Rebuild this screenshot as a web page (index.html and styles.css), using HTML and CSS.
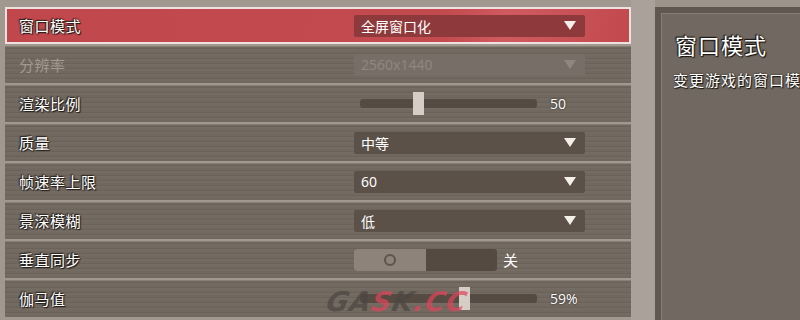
FILE: index.html
```html
<!DOCTYPE html>
<html lang="zh">
<head>
<meta charset="utf-8">
<link rel="stylesheet" href="styles.css">
</head>
<body>
<div class="screen">
  <div class="list">
    <div class="row selected">
      <div class="label">窗口模式</div>
      <div class="control"><div class="select sel-red"><span>全屏窗口化</span><i class="arrow"></i></div></div>
    </div>
    <div class="row disabled">
      <div class="label">分辨率</div>
      <div class="control"><div class="select sel-dis"><span>2560x1440</span><i class="arrow"></i></div></div>
    </div>
    <div class="row">
      <div class="label">渲染比例</div>
      <div class="control"><div class="slider"><div class="track"><div class="thumb" style="left:53px"></div></div><span class="val">50</span></div></div>
    </div>
    <div class="row">
      <div class="label">质量</div>
      <div class="control"><div class="select"><span>中等</span><i class="arrow"></i></div></div>
    </div>
    <div class="row">
      <div class="label">帧速率上限</div>
      <div class="control"><div class="select"><span>60</span><i class="arrow"></i></div></div>
    </div>
    <div class="row">
      <div class="label">景深模糊</div>
      <div class="control"><div class="select"><span>低</span><i class="arrow"></i></div></div>
    </div>
    <div class="row">
      <div class="label">垂直同步</div>
      <div class="control"><div class="toggle"><div class="tog-on"><span class="ring"></span></div></div><span class="tog-text">关</span></div>
    </div>
    <div class="row">
      <div class="label">伽马值</div>
      <div class="control"><div class="slider"><div class="track"><div class="thumb" style="left:99px"></div></div><span class="val">59%</span></div></div>
      <div class="watermark"><span class="wm-d">GA</span><span class="wm-r">S</span><span class="wm-d">K</span><span class="wm-r">.CC</span></div>
    </div>
  </div>
  <div class="gap"></div>
  <div class="panel">
    <div class="panel-inner">
      <div class="p-title">窗口模式</div>
      <div class="p-desc">变更游戏的窗口模式</div>
    </div>
  </div>
</div>
</body>
</html>
```
FILE: styles.css
```css
* { box-sizing: border-box; }
html, body { margin: 0; padding: 0; }
body {
  width: 800px; height: 320px; overflow: hidden;
  background: #9d958c;
  font-family: "Noto Sans CJK SC", "Noto Sans", sans-serif;
  color: #fff;
}
.screen { display: flex; height: 320px; }
.list {
  flex: 0 0 631px;
  padding: 7px 0 0 5px;
  display: flex; flex-direction: column; gap: 2px;
  background: #a1998f;
}
.row {
  position: relative;
  height: 37px;
  display: flex; align-items: center;
  background: repeating-linear-gradient(180deg, #71685f 0, #71685f 2px, #6b625a 2px, #6b625a 3px, #746b62 3px, #746b62 5px);
  box-shadow: inset 0 1px 0 #867d73;
}
.row.selected {
  background: linear-gradient(100deg, #c0474c 0%, #c34b50 70%, #cf5a5f 80%, #c24a4f 100%);
  border: 2px solid #efe1df;
  box-shadow: none;
}
.row.selected .label { padding-left: 12px; }
.label {
  width: 349px;
  padding-left: 14px;
  font-size: 15px;
  letter-spacing: 0.5px;
  text-shadow: 0 0 2px #1d1814, 1px 1px 1px #1d1814, -1px -1px 1px #2a231e;
}
.row.selected .control { margin-left: -2px; }
.row.disabled .label { color: #a29a90; text-shadow: none; }
.control { display: flex; align-items: center; }
.select {
  width: 231px; height: 22px;
  background: #5b5148;
  border-radius: 2px;
  display: flex; align-items: center; justify-content: space-between;
  padding: 0 9px 0 7px;
  font-family: "Noto Sans", "Noto Sans CJK SC", sans-serif;
  font-size: 14px;
}
.sel-red { background: #8e3a3c; }
.sel-dis { background: #776f67; color: #8f877e; }
.arrow {
  width: 0; height: 0;
  border-left: 6px solid transparent;
  border-right: 6px solid transparent;
  border-top: 9px solid #f4efe9;
}
.sel-dis .arrow { border-top-color: #8f877e; }
.slider { display: flex; align-items: center; padding-left: 6px; }
.track {
  position: relative;
  width: 177px; height: 9px;
  background: #554b42;
  border-radius: 3px;
}
.thumb {
  position: absolute; top: -7px;
  width: 11px; height: 23px;
  background: #d6cec6;
}
.val { margin-left: 13px; font-size: 14px; font-family: "Open Sans", "Noto Sans", sans-serif; text-shadow: 0 0 2px #1d1814; }
.toggle {
  width: 143px; height: 22px;
  background: #554a41;
  border-radius: 3px;
  display: flex;
}
.tog-on {
  width: 72px; height: 22px;
  background: #8d837a;
  border-radius: 3px 0 0 3px;
  display: flex; align-items: center; justify-content: center;
}
.ring {
  width: 12px; height: 12px;
  border: 2px solid #5e544b;
  border-radius: 50%;
}
.tog-text { margin-left: 6px; font-size: 15px; }
.watermark {
  position: absolute; left: 322px; top: 8px;
  font-family: "DejaVu Sans", sans-serif;
  font-weight: bold; font-style: italic;
  font-size: 27px; letter-spacing: 1px;
  transform: skewX(-12deg);
  opacity: 0.7;
  line-height: 1;
}
.wm-d { color: #4c4641; }
.wm-r { color: #e0445a; }
.gap { flex: 0 0 24px; background: #aaa29a; }
.panel {
  flex: 1 1 0;
  min-width: 0;
  margin-top: 7px;
  background: #5f5750;
  padding: 6px 0 0 6px;
}
.panel-inner {
  height: 100%;
  background: #716961;
  border-left: 1px solid #857c73;
  border-top: 1px solid #857c73;
  padding: 14px 0 0 13px;
  white-space: nowrap;
  overflow: hidden;
}
.p-title {
  font-size: 22px;
  letter-spacing: 1px;
  text-shadow: 0 0 2px #15110e, 1px 1px 1px #15110e, -1px -1px 1px #15110e;
}
.p-desc {
  margin-top: 9px;
  margin-left: -2px;
  font-size: 15px;
  letter-spacing: 1px;
  text-shadow: 0 0 2px #15110e, 1px 1px 1px #15110e;
}
```
